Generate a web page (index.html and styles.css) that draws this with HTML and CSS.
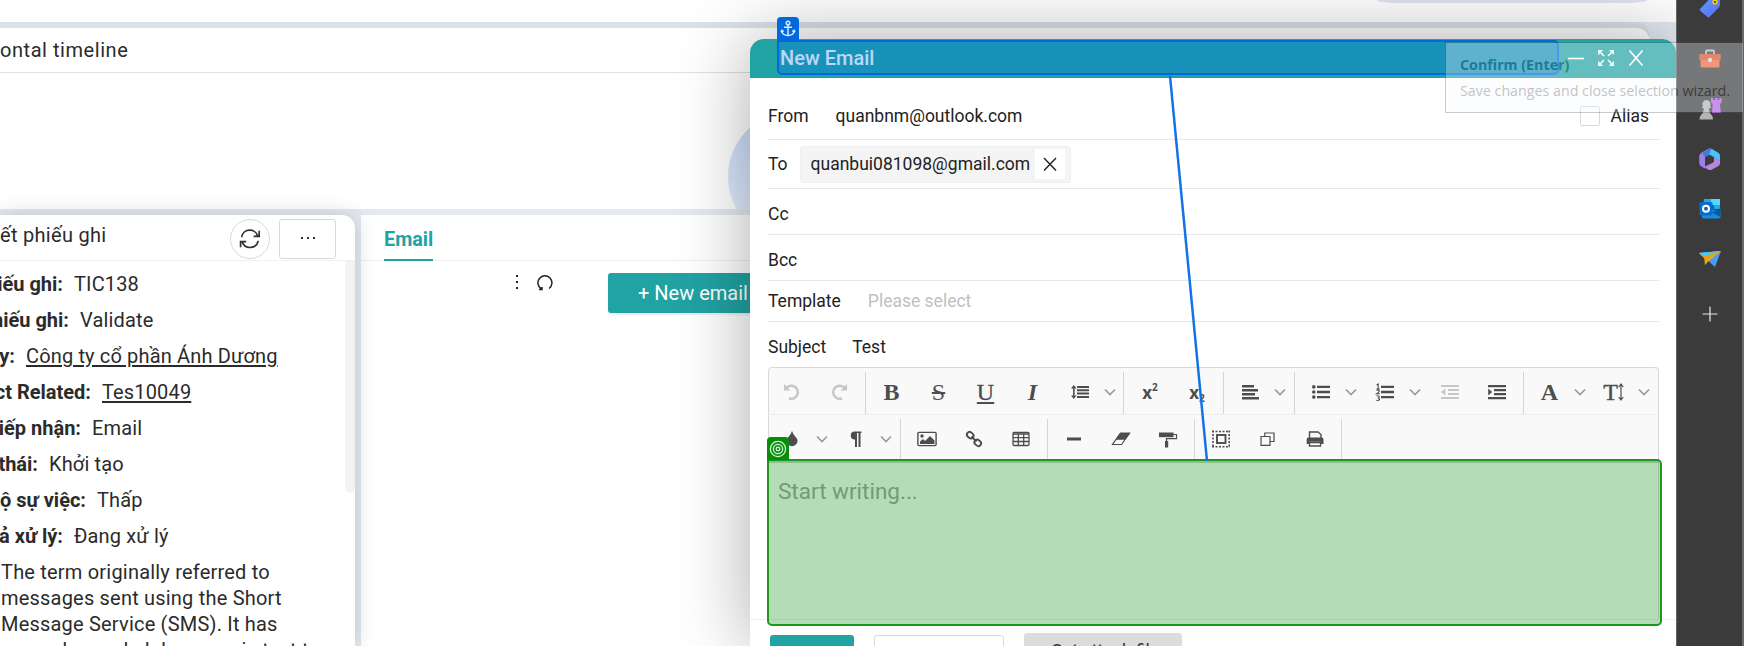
FILE: index.html
```html
<!DOCTYPE html>
<html lang="vi">
<head>
<meta charset="utf-8">
<title>New Email</title>
<link rel="stylesheet" href="styles.css">
</head>
<body>
<div class="app">
  <main class="page">
    <div class="topbar"><span class="topbar-pill"></span></div>
    <section class="timeline">
      <h2 class="timeline-title">ontal timeline</h2>
      <div class="timeline-body"><span class="bubble"></span></div>
    </section>
    <div class="columns">
      <section class="ticket">
        <header class="ticket-head">
          <h2 class="ticket-title">ết phiếu ghi</h2>
          <button class="round-btn"><svg width="22" height="20" viewBox="0 0 22 20" fill="none" stroke="#333" stroke-width="1.7"><path d="M2.6 8.2A8.3 8.3 0 0 1 18.6 6.6M20.2 1.8v5.6h-5.6M19.2 11.8A8.3 8.3 0 0 1 3.4 13.4M1.6 18.2v-5.6h5.6"/></svg></button>
          <button class="more-btn"><i></i><i></i><i></i></button>
        </header>
        <div class="ticket-body">
          <dl class="fields">
            <div class="field"><dt style="width:63px">iếu ghi:</dt><dd>TIC138</dd></div>
            <div class="field"><dt style="width:69px">hiếu ghi:</dt><dd>Validate</dd></div>
            <div class="field"><dt style="width:15px">y:</dt><dd class="link">Công ty cổ phần Ánh Dương</dd></div>
            <div class="field"><dt style="width:91px">ct Related:</dt><dd class="link">Tes10049</dd></div>
            <div class="field"><dt style="width:81px">iếp nhận:</dt><dd>Email</dd></div>
            <div class="field"><dt style="width:38px">thái:</dt><dd>Khởi tạo</dd></div>
            <div class="field"><dt style="width:86px">ộ sự việc:</dt><dd>Thấp</dd></div>
            <div class="field"><dt style="width:63px">ả xử lý:</dt><dd>Đang xử lý</dd></div>
          </dl>
          <p class="desc">The term originally referred to<br>messages sent using the Short<br>Message Service (SMS). It has<br>grown beyond alphanumeric text to</p>
          <span class="scroll"></span>
        </div>
      </section>
      <section class="mail">
        <nav class="tabs"><a class="tab">Email</a></nav>
        <div class="mail-tools">
          <span class="kebab"><i></i><i></i><i></i></span>
          <svg class="reload" width="16" height="17" viewBox="0 0 16 17" fill="none" stroke="#222" stroke-width="1.5"><path d="M4.300 14.800A7 7 0 1 1 12 14.500M2 15.600h3v-2.600"/></svg>
          <button class="new-btn">+ New email</button>
        </div>
      </section>
    </div>
  </main>
  <aside class="rail">
    <svg width="24" height="24" viewBox="0 0 24 24"><defs><linearGradient id="g1" x1="0" y1="0" x2="1" y2="1"><stop offset="0" stop-color="#5b9cff"/><stop offset="1" stop-color="#5a6bf2"/></linearGradient></defs><path d="M2 13 12 2.5Q13 1.500 14.500 1.500H20q2 0 2 2V9q0 1-.8 2L11.500 21q-1 1-2 0L2 14.500q-.7-.7 0-1.500z" fill="url(#g1)"/><circle cx="17" cy="6" r="2.700" fill="#f5c70a"/><circle cx="17" cy="6" r="1" fill="#3b3b3b"/></svg>
    <svg width="24" height="24" viewBox="0 0 24 24"><path d="M8 7V4.500Q8 3.500 9 3.500h6q1 0 1 1V7" fill="none" stroke="#b9b9b9" stroke-width="1.800"/><path d="M2.500 12h19v7q0 1.500-1.500 1.500H4q-1.500 0-1.500-1.500z" fill="#f0683f"/><path d="M2.500 7h19q1.300 0 1.300 1.300v3.200Q22.800 13 21.300 13H2.700q-1.500 0-1.500-1.500V8.300Q1.200 7 2.500 7z" fill="#d6532c"/><circle cx="12" cy="13" r="2.200" fill="#d9d9d9"/></svg>
    <svg width="24" height="24" viewBox="0 0 24 24"><path d="M13 1h2v2h2V1h2.500v2h1.800V1H23.500v4.500L22 7l.8 9H14l.7-9L13 5.500z" fill="#b961ea"/><path d="M8.500 3a4 4 0 0 1 3.600 6q1.200.4.900 2H11q0 5 2.500 7 1.500 1 1.500 4.500H1.500Q1.500 19 3 18q2.700-2 2.700-7H4q-.3-1.600.9-2a4 4 0 0 1 3.600-6z" fill="#b5b5b5"/></svg>
    <svg width="24" height="24" viewBox="0 0 24 24"><path d="M10 2 3 6Q1.500 7 1.500 9v7q0 2 1.500 3l4 2.400V9l6-4 8 4-7-6.500Q12 1 10 2z" fill="#a889e6"/><path d="M10 2q2-1 4 0l6.500 4Q22 7 22 9v7l-7-5-4-2.500L7 10V16L3 14V7z" fill="#4179e0"/><path d="M13.500 1.800 20.500 6Q22 7 22 9v5l-6-4-5-3z" fill="#48c5f0"/><path d="M1.500 9v7q0 2 1.500 3l4 2.400V10L4 6z" fill="#9a80e2"/><path d="M22 13.500V16q0 2-1.500 3L14 22.500q-2 1-4 0L6 20l9-4.500V10z" fill="#b686dc"/><path d="M9 9.500 12 8l4 2.500v4L12 17l-3-2z" fill="#3b3b3b"/></svg>
    <svg width="24" height="24" viewBox="0 0 24 24"><path d="M6 2h14.500q1.500 0 1.500 1.500V12H5z" fill="#28a8ea"/><path d="M13 2h9v6h-9z" fill="#50d9ff"/><path d="M5 8h11v6H5z" fill="#0a64b8"/><path d="M4 13h18.500v7q0 1.500-1.500 1.500H5.500Q4 21.500 4 20z" fill="#1490df"/><path d="M22.500 11v9L14 15.500z" fill="#0f5a96"/><rect x="1.500" y="5" width="13" height="13.500" rx="1.500" fill="#0a6cc8"/><circle cx="8" cy="11.700" r="3" fill="none" stroke="#fff" stroke-width="2"/></svg>
    <svg width="24" height="24" viewBox="0 0 24 24"><path d="M1 6 23 4 17 20 11.500 15z" fill="#4a9cf0"/><path d="M1 6 23 4 7 11z" fill="#46baf4"/><path d="M23 4 6.500 11.500 7 18l3.500-4z" fill="#f6b31d"/><path d="m1 6 5.500 5.500L7 18 10 13 23 4 6 9z" fill="#eba10f"/><path d="M1 6 23 4 6 9z" fill="#4cc6f5"/></svg>
    <svg width="24" height="24" viewBox="0 0 24 24"><path d="M12 4.500v15M4.500 12h15" stroke="#e8e8e8" stroke-width="1.200"/></svg>
  </aside>
</div>

<section class="modal">
  <header class="modal-head">
    <h1 class="modal-title">New Email</h1>
    <div class="win-btns">
      <svg width="18" height="18" viewBox="0 0 18 18"><path d="M1 9.500h16" stroke="#fff" stroke-width="1.700"/></svg>
      <svg width="18" height="18" viewBox="0 0 18 18" fill="none" stroke="#fff" stroke-width="1.500"><path d="M1.800 5.500V1.800H5.500M12.500 1.800h3.700V5.500M16.200 12.500v3.700H12.500M5.500 16.200H1.800V12.500M2 2l5 5M16 2l-5 5M16 16l-5-5M2 16l5-5"/></svg>
      <svg width="18" height="18" viewBox="0 0 18 18"><path d="m2.500 1.500 13 15m0-15-13 15" stroke="#fff" stroke-width="1.700"/></svg>
    </div>
  </header>
  <div class="form">
    <div class="row row-from"><label>From</label><span class="val">quanbnm@outlook.com</span><span class="alias"><i class="check"></i>Alias</span></div>
    <div class="row row-to"><label>To</label><span class="chip">quanbui081098@gmail.com<b class="chip-x"><svg width="16" height="16" viewBox="0 0 16 16"><path d="m2 2 12 12.500M14 2 2 14.500" stroke="#222" stroke-width="1.400"/></svg></b></span></div>
    <div class="row row-cc"><label>Cc</label></div>
    <div class="row row-cc"><label>Bcc</label></div>
    <div class="row row-tpl"><label>Template</label><span class="hint">Please select</span></div>
    <div class="row row-sub"><label>Subject</label><span class="val">Test</span></div>
    <div class="editor">
      <div class="tools">
        <span class="tb off"><svg viewBox="0 0 30 30"><path d="M9 11.500A6.500 6.500 0 1 1 12 21.300" fill="none" stroke="currentColor" stroke-width="2.400"/><path d="M7 7v6.500h6.500z"/></svg></span>
        <span class="tb off"><svg viewBox="0 0 30 30"><path d="M21 11.500A6.500 6.500 0 1 0 18 21.300" fill="none" stroke="currentColor" stroke-width="2.400"/><path d="M23 7v6.500h-6.500z"/></svg></span>
        <span class="sep"></span>
        <span class="tb serif bold">B</span>
        <span class="tb serif strike">S</span>
        <span class="tb serif under">U</span>
        <span class="tb serif ital">I</span>
        <span class="tb dd"><svg viewBox="0 0 30 30"><path d="M12 9h12v2H12zM12 12.300h12v2H12zM12 15.600h12v2H12zM12 18.900h12v2H12zM8 10.500h1.600v9H8zM8.800 8l2.800 3.500H6zM8.800 22 6 18.500h5.600z"/></svg><svg class="chev" viewBox="0 0 12 8"><path d="m1 1.500 5 5 5-5"/></svg></span>
        <span class="sep"></span>
        <span class="tb sup">x<small>2</small></span>
        <span class="tb sub">x<small>2</small></span>
        <span class="sep"></span>
        <span class="tb dd"><svg viewBox="0 0 30 30"><path d="M7 8h12v2.400H7zM7 12h16v2.400H7zM7 16h13v2.400H7zM7 20h17v2.400H7z"/></svg><svg class="chev" viewBox="0 0 12 8"><path d="m1 1.500 5 5 5-5"/></svg></span>
        <span class="sep"></span>
        <span class="tb dd"><svg viewBox="0 0 30 30"><path d="M11 8.700h13v2.400H11zM11 13.800h13v2.400H11zM11 18.900h13v2.400H11z"/><circle cx="7.800" cy="9.900" r="1.800"/><circle cx="7.800" cy="15" r="1.800"/><circle cx="7.800" cy="20.100" r="1.800"/></svg><svg class="chev" viewBox="0 0 12 8"><path d="m1 1.500 5 5 5-5"/></svg></span>
        <span class="tb dd"><svg viewBox="0 0 30 30"><path d="M11 8.700h13v2.400H11zM11 13.800h13v2.400H11zM11 18.900h13v2.400H11z"/><path d="M6.600 8 8.200 7v5M6.400 12h3.400M6.600 13.300q3-.6 2.600 1-.3 1-2.600 2.500h3.200M6.500 18.800q3-.4 2.800 1.200-.2 1-1.800 1 2.200 0 2 1.300-.2 1.500-3.200 1" fill="none" stroke="currentColor" stroke-width="1.100"/></svg><svg class="chev" viewBox="0 0 12 8"><path d="m1 1.500 5 5 5-5"/></svg></span>
        <span class="tb off"><svg viewBox="0 0 30 30"><path d="M6 8h18v2H6zM13 12h11v2H13zM13 16h11v2H13zM6 20h18v2H6zM10.500 11.500v7L6 15z"/></svg></span>
        <span class="tb"><svg viewBox="0 0 30 30"><path d="M6 8h18v2.200H6zM12 12h12v2.200H12zM12 16h12v2.200H12zM6 20h18v2.200H6zM6.200 11.500v7l4-3.500z"/></svg></span>
        <span class="sep"></span>
        <span class="tb dd serif fontfam"><em>A</em><svg class="chev" viewBox="0 0 12 8"><path d="m1 1.500 5 5 5-5"/></svg></span>
        <span class="tb dd serif fontsize"><em>T</em><svg class="updown" viewBox="0 0 6 18"><path d="M3 1v16M.8 4 3 1l2.200 3M.8 14 3 17l2.200-3" fill="none" stroke="currentColor" stroke-width="1.200"/></svg><svg class="chev" viewBox="0 0 12 8"><path d="m1 1.500 5 5 5-5"/></svg></span>
      </div>
      <div class="tools second">
        <span class="tb dd"><svg viewBox="0 0 30 30"><path d="M15 7q1 3 3 5.200 2.500 2.500 2.500 4.500a5.500 5.500 0 0 1-11 0q0-2 2.500-4.500Q14 10 15 7z"/></svg><svg class="chev" viewBox="0 0 12 8"><path d="m1 1.500 5 5 5-5"/></svg></span>
        <span class="tb dd"><svg viewBox="0 0 30 30"><path d="M13.500 7.500H20.500V9h-1v14h-2V9h-1.500v14h-2v-7.500a4 4 0 0 1-.5-8z"/></svg><svg class="chev" viewBox="0 0 12 8"><path d="m1 1.500 5 5 5-5"/></svg></span>
        <span class="sep"></span>
        <span class="tb"><svg viewBox="0 0 30 30"><rect x="5.900" y="8.400" width="18.200" height="13.200" rx="1" fill="none" stroke="currentColor" stroke-width="1.400"/><circle cx="10" cy="12" r="1.700"/><path d="M8 20v-2.500l3-2.500 2 2 5-5 4.500 4.500V20z"/></svg></span>
        <span class="tb"><svg viewBox="0 0 30 30" fill="none" stroke="currentColor" stroke-width="1.900"><rect x="7.800" y="8.300" width="7" height="5.400" rx="2.700" transform="rotate(40 11 11)"/><rect x="15.200" y="16.300" width="7" height="5.400" rx="2.700" transform="rotate(40 19 19)"/><path d="m12.500 12.500 5 5"/></svg></span>
        <span class="tb"><svg viewBox="0 0 30 30" fill="none" stroke="currentColor" stroke-width="1.300"><rect x="7" y="8.500" width="16" height="13" rx="1"/><path d="M7 10h16M7 13.700h16M7 17.500h16M12.300 10v11M17.700 10v11"/></svg></span>
        <span class="sep"></span>
        <span class="tb"><svg viewBox="0 0 30 30"><path d="M8 13.500h14v3H8z"/></svg></span>
        <span class="tb"><svg viewBox="0 0 30 30"><path d="M14.500 9.200h9L15.500 20.500h-9z" fill="none" stroke="currentColor" stroke-width="1.200"/><path d="M14.200 9h10l-4.700 6.800H9.300z"/></svg></span>
        <span class="tb"><svg viewBox="0 0 30 30"><path d="M6 8.500h14.500v4.700H6z"/><path d="M20 10.500h3.500v4.200h-10v3" fill="none" stroke="currentColor" stroke-width="1.200"/><path d="M12 17h3.200v6.500H12z"/></svg></span>
        <span class="sep"></span>
        <span class="tb"><svg viewBox="0 0 30 30" fill="none" stroke="currentColor" stroke-width="1.600"><path d="M6 7.500h18M6 22.800h18M7 6.500v17M23.200 6.500v17" stroke-dasharray="2 1.500"/><rect x="11" y="11" width="8.500" height="8" stroke-width="1.900"/></svg></span>
        <span class="tb"><svg viewBox="0 0 30 30" fill="none" stroke="currentColor" stroke-width="1.200"><path d="M11.800 12V9h9.200v8.500h-4M8 12.500h9v8.800H8z"/></svg></span>
        <span class="tb"><svg viewBox="0 0 30 30"><path d="M9.500 14V8h8.500l3 2.500V14" fill="none" stroke="currentColor" stroke-width="1.400"/><path d="M8.500 13.500h13.200q1.800 0 1.800 2V20h-3v-2.300H9.600V20H6.700v-4.500q0-2 1.800-2z"/><path d="M9.500 18.500h11V22h-11z" fill="none" stroke="currentColor" stroke-width="1.300"/></svg></span>
        <span class="sep"></span>
      </div>
      <div class="write"><p>Start writing...</p></div>
    </div>
  </div>
  <footer class="modal-foot">
    <span class="btn primary"></span>
    <span class="btn plain"></span>
    <span class="btn gray">Get attach file</span>
  </footer>
</section>

<div class="pick pick-target">
  <span class="tag"><svg width="18" height="18" viewBox="0 0 18 18" fill="none" stroke="#d9f0d9" stroke-width="1.300"><circle cx="9" cy="9" r="7.600"/><circle cx="9" cy="9" r="4.600"/><circle cx="9" cy="9" r="1.800"/></svg></span>
</div>
<svg class="wire" width="42" height="386" viewBox="0 0 42 386"><path d="M2 0 39 385" stroke="#1273e6" stroke-width="2.500"/></svg>
<div class="pick pick-anchor">
  <span class="tag"><svg width="16" height="17" viewBox="0 0 16 17" fill="none" stroke="#d6e8ff" stroke-width="1.500"><circle cx="8" cy="3" r="1.800"/><path d="M8 5v10.500M4 7.300h8M1.600 10.500q.6 5 6.400 5t6.400-5M1 12.300l.8-2 1.900 1.200M15 12.300l-.8-2-1.900 1.200"/></svg></span>
</div>
<div class="tip"><strong>Confirm (Enter)</strong><span>Save changes and close selection wizard.</span></div>
</body>
</html>
```
FILE: styles.css
```css
* { box-sizing: border-box; }
html, body { margin: 0; height: 646px; overflow: hidden; }
body { position: relative; width: 1744px; font-family: Roboto, "Liberation Sans", sans-serif; font-size: 20px; color: #2b2b2b; background: #fff; }
h1, h2, p, dl, dt, dd { margin: 0; font-weight: 400; }
button { padding: 0; background: #fff; font: inherit; }
svg { display: block; flex: none; }
i, em { font-style: normal; }

.app { display: flex; height: 646px; }
.page { display: flex; flex-direction: column; width: 1676px; height: 646px; background: #e4e9f1; overflow: hidden; }
.topbar { height: 22px; background: #fff; display: flex; justify-content: flex-end; flex: none; }
.topbar-pill { width: 270px; height: 3px; margin-right: 29px; background: #dfe3f1; border-radius: 0 0 20px 20px / 0 0 3px 3px; }

.timeline { flex: none; width: 1650px; height: 181px; margin-top: 6px; background: #fff; border-top-right-radius: 14px; box-shadow: 0 -6px 0 #dce0e8; }
.timeline-title { height: 45px; padding-top: 1px; font-size: 20px; line-height: 43px; letter-spacing: .55px; border-bottom: 1px solid #dfdfdf; }
.timeline-body { display: flex; height: 136px; overflow: hidden; }
.bubble { width: 131px; height: 131px; margin: 38px 0 0 728px; flex: none; border-radius: 50%; background: linear-gradient(#c9d9fb, #e2edff 75%); }

.columns { display: flex; gap: 6px; flex: 1; margin-top: 6px; }
.ticket { position: relative; width: 355px; background: #fff; border-top-right-radius: 13px; box-shadow: 0 0 22px rgba(0, 0, 0, .17); }
.ticket-head { display: flex; align-items: center; height: 46px; border-bottom: 1px solid #f0f0f0; }
.ticket-title { width: 230px; font-size: 20px; line-height: 36px; padding-bottom: 5px; letter-spacing: .3px; }
.round-btn { display: flex; align-items: center; justify-content: center; width: 40px; height: 40px; border: 1px solid #d9d9d9; border-radius: 50%; margin-top: 3px; }
.more-btn { display: flex; gap: 4px; align-items: center; justify-content: center; width: 57px; height: 40px; margin: 3px 0 0 9px; border: 1px solid #d9d9d9; border-radius: 3px; }
.more-btn i { width: 2px; height: 2px; margin-bottom: 2px; background: #333; }
.ticket-body { position: relative; height: 385px; overflow: hidden; }
.fields { padding-top: 5px; }
.field { display: flex; height: 36px; line-height: 36px; white-space: nowrap; }
.field dt { display: flex; justify-content: flex-end; font-weight: 700; }
.field dd { margin-left: 11px; letter-spacing: .15px; }
.link { text-decoration: underline; text-underline-offset: 2px; }
.desc { padding: 5px 0 0 1px; line-height: 26px; white-space: nowrap; letter-spacing: .2px; }
.scroll { position: absolute; top: 0; right: 0; width: 10px; height: 232px; background: #f5f2f2; border-radius: 0 0 5px 5px; }

.mail { flex: 1; background: #fff; }
.tabs { display: flex; height: 46px; padding-left: 23px; border-bottom: 1px solid #efefef; }
.tab { height: 46px; line-height: 49px; font-weight: 700; font-size: 19.800px; color: #21a2a3; border-bottom: 2px solid #21a2a3; }
.mail-tools { display: flex; padding: 12px 0 0 155px; }
.kebab { display: flex; flex-direction: column; gap: 4px; margin-top: 2px; }
.kebab i { width: 2px; height: 2px; background: #222; }
.reload { margin: 1px 0 0 19px; }
.new-btn { width: 170px; height: 40px; margin-left: 55px; border: 0; border-radius: 3px; background: #21a2a3; color: #fff; text-align: left; padding-left: 30px; line-height: 36px; box-shadow: 0 2px 2px rgba(0, 0, 0, .08); }

.rail { display: flex; flex-direction: column; align-items: center; width: 68px; background: #3b3b3b; border-right: 2px solid #6a6a6a; border-left: 1px solid #666; }
.rail svg { margin-top: 26px; }
.rail svg:first-child { margin-top: -4px; }
.rail svg:nth-child(2) { margin-top: 27px; }
.rail svg:last-child { margin-top: 31px; }

.modal { position: absolute; left: 750px; top: 39px; width: 926px; height: 607px; background: #fff; border-radius: 14px 14px 0 0; box-shadow: 0 0 75px rgba(0, 0, 0, .33); clip-path: inset(-39px 0 0 -90px); }
.modal-head { display: flex; justify-content: space-between; align-items: center; height: 39px; padding: 0 31px 2px 30px; background: #21a2a3; border-radius: 14px 14px 0 0; }
.modal-title { font-size: 20px; font-weight: 500; color: #fff; }
.win-btns { display: flex; gap: 12px; }
.form { padding: 0 17px 0 18px; font-size: 17.500px; }
.row { display: flex; align-items: center; border-bottom: 1px solid #e6e7e9; color: #222; }
.row-from { height: 62px; padding-top: 15px; }
.row-from .val { margin-left: 27px; }
.alias { display: flex; align-items: center; gap: 11px; margin: 0 10px 0 auto; }
.check { width: 20px; height: 20px; border: 1px solid #d9d9d9; border-radius: 2px; }
.row-to { height: 49px; }
.chip { display: flex; align-items: center; width: 271px; height: 37px; margin-left: 12px; padding-left: 10px; background: #f4f4f4; border: 1px solid #efefef; border-radius: 3px; }
.chip-x { display: flex; align-items: center; justify-content: center; width: 30px; height: 30px; margin: 0 5px 0 auto; background: #fff; }
.row-cc { height: 46px; padding-top: 4px; }
.row-tpl { height: 41px; }
.hint { margin-left: 27px; color: #bfbfbf; }
.row-sub { height: 45px; padding-top: 4px; border: 0; }
.row-sub .val { margin-left: 26px; }

.editor { height: 252px; border: 1px solid #d9d9d9; border-bottom: 0; border-radius: 4px 4px 0 0; background: #f9f9f9; }
.tools { display: flex; height: 47px; margin-left: -1px; border-bottom: 1px solid #ededed; color: #4d4d4d; }
.tools.second { height: 45px; border: 0; }
.tb { position: relative; display: flex; align-items: center; justify-content: center; width: 47px; height: 48px; flex: none; }
.tb svg { width: 30px; height: 30px; fill: currentColor; }
.tb svg[fill="none"] { fill: none; }
.tb.off { color: #c6c6c6; }
.tb.dd { width: 64.500px; padding-left: 8.500px; justify-content: flex-start; }
.tb .chev { width: 12px; height: 8px; margin-left: 9px; fill: none; stroke: #999; stroke-width: 1.600; }
.sep { width: 1px; height: 42px; margin: 4px 2.500px 0; background: #d5d5d5; flex: none; }
.serif { font-family: "Liberation Serif", serif; font-size: 24px; }
.bold { font-weight: 700; }
.strike { text-decoration: line-through; text-decoration-thickness: 1.500px; }
.under { text-decoration: underline; text-decoration-thickness: 1.500px; text-underline-offset: 2px; -webkit-text-stroke: .3px; }
.ital { font-style: italic; font-weight: 700; }
.fontfam em { width: 30px; text-align: center; font-weight: 700; }
.fontsize em { width: 19px; text-align: right; -webkit-text-stroke: .4px; }
.tb .updown { width: 6px; height: 18px; margin-right: 5px; }
.sup, .sub { font-family: "Open Sans", sans-serif; font-weight: 700; font-size: 17px; }
.sup small { font-size: 10px; margin-bottom: 10px; }
.sub small { font-size: 10px; margin-top: 12px; }
.write { height: 159px; padding: 10px 0 0 9px; background: #fff; border-top: 3px solid #ccc; font-size: 22.500px; line-height: 36px; color: #a0a0a0; }

.modal-foot { display: flex; align-items: flex-start; height: 27px; padding: 13px 20px 0; border-top: 1px solid #efefef; overflow: hidden; }
.btn { display: block; flex: none; height: 40px; margin-top: 2px; border-radius: 3px; }
.primary { width: 84px; background: #21a2a3; }
.plain { width: 130px; margin-left: 20px; border: 1px solid #d9d9d9; }
.gray { width: 158px; margin: 0 0 0 20px; padding-left: 27px; background: #dcdcdc; font-size: 17.500px; line-height: 36px; color: #333; }

.pick { position: absolute; border-radius: 5px; }
.pick .tag { position: absolute; display: flex; align-items: center; justify-content: center; width: 22px; height: 23px; border-radius: 4px 4px 0 0; }
.pick-anchor { left: 777px; top: 40px; width: 782px; height: 35px; border: 2px solid #0069de; border-top-left-radius: 0; background: rgba(0, 103, 241, .27); }
.pick-anchor .tag { left: -2px; top: -25px; background: #0069de; }
.pick-target { left: 767px; top: 459px; width: 895px; height: 167px; border: 2px solid #1c981f; border-top-left-radius: 0; background: rgba(14, 146, 18, .31); }
.pick-target .tag { left: -2px; top: -24px; background: #068e09; }
.wire { position: absolute; left: 1168px; top: 76px; }
.tip { position: absolute; left: 1445px; top: 42px; display: flex; flex-direction: column; width: 299px; height: 71px; padding: 9px 0 0 14px; border: 1px solid #555; background: #f8fbff; opacity: .31; font-family: "Open Sans", sans-serif; font-size: 14.250px; line-height: 26px; color: #3d3d3d; white-space: nowrap; }
.tip strong { color: #2b4955; }
```
